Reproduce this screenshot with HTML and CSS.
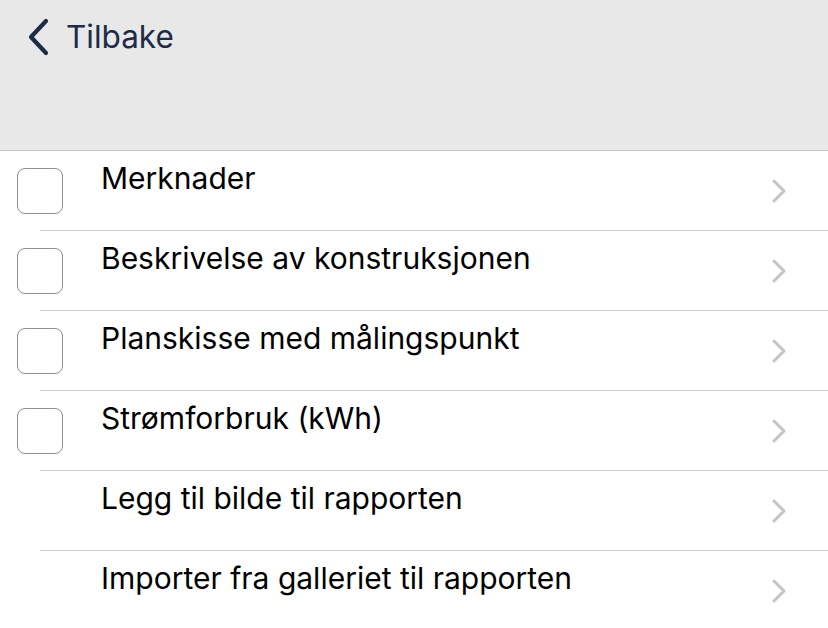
FILE: index.html
```html
<!DOCTYPE html>
<html>
<head>
<meta charset="utf-8">
<link rel="stylesheet" href="styles.css">
</head>
<body>
<header class="nav">
  <a class="back">
    <svg class="back-icon" width="24" height="38" viewBox="0 0 24 38"><path d="M20 3 L5 19 L20 35" fill="none" stroke="#1d2b47" stroke-width="4.2" stroke-linecap="round" stroke-linejoin="round"/></svg>
    <span class="back-label">Tilbake</span>
  </a>
</header>
<ul class="list">
  <li class="row"><span class="check"></span><span class="label">Merknader</span><svg class="chev" width="16" height="26" viewBox="0 0 16 26"><path d="M3 3 L13 13 L3 23" fill="none" stroke="#c4c4c6" stroke-width="3" stroke-linecap="round" stroke-linejoin="round"/></svg></li>
  <li class="row"><span class="check"></span><span class="label">Beskrivelse av konstruksjonen</span><svg class="chev" width="16" height="26" viewBox="0 0 16 26"><path d="M3 3 L13 13 L3 23" fill="none" stroke="#c4c4c6" stroke-width="3" stroke-linecap="round" stroke-linejoin="round"/></svg></li>
  <li class="row"><span class="check"></span><span class="label">Planskisse med målingspunkt</span><svg class="chev" width="16" height="26" viewBox="0 0 16 26"><path d="M3 3 L13 13 L3 23" fill="none" stroke="#c4c4c6" stroke-width="3" stroke-linecap="round" stroke-linejoin="round"/></svg></li>
  <li class="row"><span class="check"></span><span class="label">Strømforbruk (kWh)</span><svg class="chev" width="16" height="26" viewBox="0 0 16 26"><path d="M3 3 L13 13 L3 23" fill="none" stroke="#c4c4c6" stroke-width="3" stroke-linecap="round" stroke-linejoin="round"/></svg></li>
  <li class="row"><span class="nocheck"></span><span class="label">Legg til bilde til rapporten</span><svg class="chev" width="16" height="26" viewBox="0 0 16 26"><path d="M3 3 L13 13 L3 23" fill="none" stroke="#c4c4c6" stroke-width="3" stroke-linecap="round" stroke-linejoin="round"/></svg></li>
  <li class="row"><span class="nocheck"></span><span class="label">Importer fra galleriet til rapporten</span><svg class="chev" width="16" height="26" viewBox="0 0 16 26"><path d="M3 3 L13 13 L3 23" fill="none" stroke="#c4c4c6" stroke-width="3" stroke-linecap="round" stroke-linejoin="round"/></svg></li>
</ul>
</body>
</html>
```
FILE: styles.css
```css
html, body {
  margin: 0;
  padding: 0;
  background: #ffffff;
  font-family: Inter, "Liberation Sans", sans-serif;
}
.nav {
  height: 150px;
  background: #e8e8e8;
  border-bottom: 1px solid #c8c8c8;
}
.back {
  display: flex;
  align-items: center;
  padding: 18px 0 0 26px;
  color: #1d2b47;
}
.back-icon {
  display: block;
}
.back-label {
  margin-left: 16px;
  font-size: 31.5px;
  line-height: 38px;
  font-weight: 400;
  color: #1d2b47;
}
.list {
  list-style: none;
  margin: 0;
  padding: 0;
}
.row {
  display: flex;
  align-items: center;
  height: 79px;
  border-bottom: 1px solid #d0d0d0;
  margin-left: 40px;
  padding-right: 41px;
}
.row:last-child {
  border-bottom: none;
}
.check {
  flex: none;
  width: 44px;
  height: 44px;
  border: 1px solid #8f8f8f;
  border-radius: 8px;
  margin-left: -23px;
}
.nocheck {
  flex: none;
  width: 46px;
  height: 46px;
  margin-left: -23px;
}
.label {
  flex: 1;
  align-self: flex-start;
  margin-left: 38px;
  padding-top: 9px;
  font-size: 30px;
  line-height: 36px;
  color: #000;
}
.chev {
  flex: none;
  display: block;
}
```
